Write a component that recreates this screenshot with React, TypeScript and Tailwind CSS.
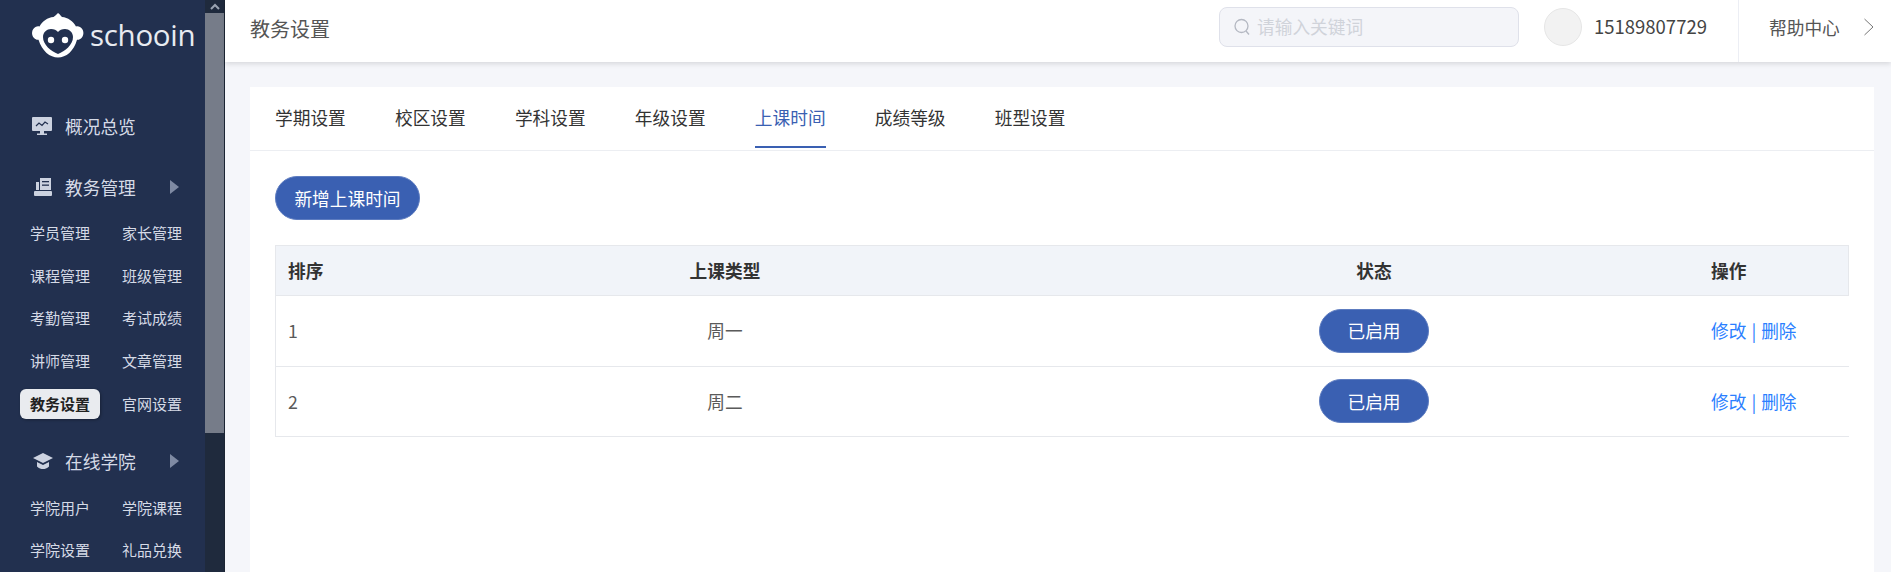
const menuOne = [
  ["学员管理", "家长管理"],
  ["课程管理", "班级管理"],
  ["考勤管理", "考试成绩"],
  ["讲师管理", "文章管理"],
  ["教务设置", "官网设置"],
];

const menuTwo = [
  ["学院用户", "学院课程"],
  ["学院设置", "礼品兑换"],
];

const tabs = ["学期设置", "校区设置", "学科设置", "年级设置", "上课时间", "成绩等级", "班型设置"];

const rows = [
  { id: 1, name: "周一" },
  { id: 2, name: "周二" },
];

const Logo = () => (
  <svg width="54" height="46" viewBox="0 0 54 46">
    <path
      d="M27 1c2 1.500 3 3 4 4 6 .5 11 4 14 9.500 1-.5 2.500-.5 4 .5 4 2 4.500 8 1.500 11-1.500 1.500-3 2-4.500 1.700C43 39 35 45.500 27 45.500S11 39 7.500 27.700c-1.500.3-3-.2-4.500-1.700C0 23 .5 17 4.500 15c1.500-1 3-1 4-.5C11.500 9 16.500 5.500 22.500 5c1.500-1 3-2.500 4.500-4z"
      fill="#fff"
    />
    <path
      d="M27 42c-7-3-15-9-15-17 0-5 4-8 8-8 3 0 5.500 1 7 3 1.500-2 4-3 7-3 4 0 8 3 8 8 0 8-8 14-15 17z"
      fill="#22304f"
    />
    <circle cx="20" cy="28" r="3.200" fill="#fff" />
    <circle cx="34" cy="28" r="3.200" fill="#fff" />
  </svg>
);

const MonitorIcon = () => (
  <svg width="20" height="20" viewBox="0 0 20 20">
    <rect x="0" y="1" width="20" height="14" rx="1" fill="#ccd2e0" />
    <path d="M4 10l3-3 3 2.500 3-3.500 3 2" fill="none" stroke="#22304f" strokeWidth="1.200" />
    <rect x="8" y="15" width="4" height="3" fill="#ccd2e0" />
    <rect x="5" y="17.500" width="10" height="1.500" fill="#ccd2e0" />
  </svg>
);

const DeskIcon = () => (
  <svg width="20" height="20" viewBox="0 0 20 20">
    <rect x="1" y="14" width="18" height="5" rx="1" fill="#ccd2e0" />
    <rect x="3" y="5" width="3" height="8" fill="#ccd2e0" />
    <rect x="7" y="1" width="11" height="12" fill="#ccd2e0" />
    <rect x="9" y="4" width="7" height="1.300" fill="#22304f" />
    <rect x="9" y="7.500" width="7" height="1.300" fill="#22304f" />
  </svg>
);

const CapIcon = () => (
  <svg width="20" height="18" viewBox="0 0 20 18">
    <path d="M10 1l10 5-10 5L0 6z" fill="#ccd2e0" />
    <path d="M4 10l6 3 6-3v4.500c-2 2-4 2.500-6 2.500s-4-.5-6-2.500z" fill="#ccd2e0" />
  </svg>
);

const Caret = () => <span className="ml-auto mr-[26px] h-0 w-0 border-y-[7px] border-l-[9px] border-y-transparent border-l-[#7f8aa3]" />;

const SubMenu = ({ items }: { items: string[][] }) => (
  <div className="flex flex-col">
    {items.map((pair, i) => (
      <div key={i} className="flex h-[42.750px] items-center pl-[20px]">
        {pair.map((label) => (
          <div
            key={label}
            className={
              label === "教务设置"
                ? "mr-[12px] flex h-[30px] w-[80px] items-center justify-center rounded-[6px] bg-[#e9ebef] text-[15px] font-bold text-[#222] shadow-[1px_1px_3px_rgba(0,0,0,0.3)]"
                : "mr-[12px] flex h-[30px] w-[80px] items-center justify-center text-[15px] text-[#d5dae6]"
            }
          >
            {label}
          </div>
        ))}
      </div>
    ))}
  </div>
);

const App = () => {
  return (
    <div className="flex h-[572px] w-[1891px] overflow-hidden bg-[#f5f6fa] font-['Noto_Sans_CJK_SC','Noto_Sans',sans-serif] text-[17.700px]">
      {/* sidebar */}
      <aside className="flex h-full w-[205px] shrink-0 flex-col bg-[#22304f]">
        <div className="flex h-[73px] items-start pl-[31px] pt-[12px]">
          <Logo />
          <span className="ml-[5px] mt-[1px] font-['Open_Sans',sans-serif] text-[29.500px] leading-[44px] tracking-[-0.300px] text-[#e8ebf1]">schooin</span>
        </div>
        <div className="mt-[24px] flex h-[62px] items-center pl-[32px] text-[#d5dae6]">
          <MonitorIcon />
          <span className="ml-[13px]">概况总览</span>
        </div>
        <div className="mt-[1px] flex h-[60px] items-center pl-[33px] text-[#d5dae6]">
          <DeskIcon />
          <span className="ml-[12px]">教务管理</span>
          <Caret />
        </div>
        <div className="-mt-[5px]">
          <SubMenu items={menuOne} />
        </div>
        <div className="mt-[10px] flex h-[53px] items-center pl-[33px] text-[#d5dae6]">
          <CapIcon />
          <span className="ml-[12px]">在线学院</span>
          <Caret />
        </div>
        <div className="-mt-[1px]">
          <SubMenu items={menuTwo} />
        </div>
      </aside>

      {/* scrollbar */}
      <div className="flex h-full w-[20px] shrink-0 flex-col border-r border-[#1b2433] bg-[#1f2a3d]">
        <div className="flex h-[13px] items-center justify-center">
          <svg width="10" height="8" viewBox="0 0 10 8">
            <path d="M1 6l4-4 4 4" fill="none" stroke="#9aa3b2" strokeWidth="2" />
          </svg>
        </div>
        <div className="h-[420px] bg-[#767c89]" />
      </div>

      <main className="flex min-w-0 flex-1 flex-col">
        {/* top bar */}
        <header className="flex h-[62px] shrink-0 items-center bg-white pl-[25px] shadow-[0_2px_5px_rgba(0,0,0,0.12)]">
          <h1 className="mb-[4px] text-[20px] font-normal text-[#555]">教务设置</h1>
          <div className="mb-[9px] ml-auto flex h-[40px] w-[300px] items-center rounded-[8px] border border-[#dfe1ea] bg-[#f4f5f9] pl-[13px] text-[#d0d3da]">
            <svg width="18" height="18" viewBox="0 0 18 18" fill="none" stroke="#b4b8c2" strokeWidth="1.300">
              <circle cx="8.500" cy="8" r="6.500" />
              <path d="M13 13l3 3.500" />
            </svg>
            <span className="ml-[6px]">请输入关键词</span>
          </div>
          <div className="mb-[8px] ml-[25px] h-[38px] w-[38px] rounded-full border border-[#e6e6e6] bg-[#f2f2f2]" />
          <span className="mb-[8px] ml-[12px] w-[144px] text-[18.500px] text-[#444]">15189807729</span>
          <div className="flex h-[62px] w-[153px] items-center border-l border-[#eceef4] pb-[8px] pl-[30px] text-[#555]">
            <span>帮助中心</span>
            <svg className="ml-[23px]" width="12" height="20" viewBox="0 0 12 20" fill="none" stroke="#777" strokeWidth="1">
              <path d="M1.500 2l8.500 8-8.500 8" />
            </svg>
          </div>
        </header>

        {/* content */}
        <section className="ml-[25px] mr-[17px] mt-[25px] flex-1 bg-white">
          <nav className="flex h-[64px] gap-[49.200px] border-b border-[#eceef2] px-[25px]">
            {tabs.map((tab) => (
              <div
                key={tab}
                className={
                  tab === "上课时间"
                    ? "mb-[1px] flex h-[61px] items-center border-b-2 border-[#3a60b2] pt-[1px] text-[#3a60b2]"
                    : "flex h-[61px] items-center border-b-2 border-transparent pt-[1px] text-[#333]"
                }
              >
                {tab}
              </div>
            ))}
          </nav>

          <div className="px-[25px] pt-[25px]">
            <button className="h-[44px] w-[145px] rounded-full border border-[#5d7cc0] bg-[#3a60b2] text-white">新增上课时间</button>

            <div className="mt-[25px] w-[1574px] text-[#5a5a5a]">
              <div className="grid h-[51px] grid-cols-[125px_648px_650px_151px] items-center border border-[#e6e8ec] bg-[#f1f4f9] font-bold text-[#333]">
                <div className="pl-[12px]">排序</div>
                <div className="text-center">上课类型</div>
                <div className="text-center">状态</div>
                <div className="pl-[12px]">操作</div>
              </div>
              {rows.map((row) => (
                <div key={row.id} className="grid h-[70.500px] grid-cols-[125px_648px_650px_151px] items-center border-b border-l border-[#e6e8ec]">
                  <div className="pl-[12px]">{row.id}</div>
                  <div className="text-center">{row.name}</div>
                  <div className="flex justify-center">
                    <button className="h-[44px] w-[110px] rounded-full border border-[#5d7cc0] bg-[#3a60b2] text-white">已启用</button>
                  </div>
                  <div className="whitespace-nowrap pl-[12px] text-[#2b7fff]">
                    修改<span className="mx-[5px]">|</span>删除
                  </div>
                </div>
              ))}
            </div>
          </div>
        </section>
      </main>
    </div>
  );
};

export default App;
